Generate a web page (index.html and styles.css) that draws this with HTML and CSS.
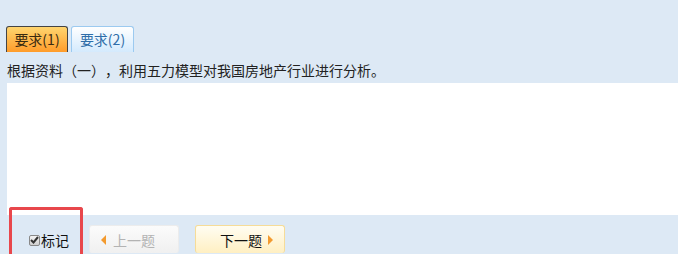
FILE: index.html
```html
<!DOCTYPE html>
<html>
<head>
<meta charset="utf-8">
<link rel="stylesheet" href="styles.css">
</head>
<body>
<div class="page">
  <div class="tabs">
    <div class="tab active">要求(1)</div>
    <div class="tab">要求(2)</div>
  </div>
  <div class="question">根据资料（一），利用五力模型对我国房地产行业进行分析。</div>
  <div class="answer"></div>
  <div class="footer">
    <div class="mark-box">
      <label class="mark"><span class="check"><svg width="9" height="8" viewBox="0 0 9 8"><path d="M1 4 L3.5 6.5 L8 1" fill="none" stroke="#333" stroke-width="2"/></svg></span>标记</label>
    </div>
    <div class="btn prev"><span class="tri-left"></span>上一题</div>
    <div class="btn next">下一题<span class="tri-right"></span></div>
  </div>
</div>
</body>
</html>
```
FILE: styles.css
```css
html, body {
  margin: 0;
  padding: 0;
}
body {
  background: #dde9f5;
  font-family: "Noto Sans CJK SC", "Liberation Sans", sans-serif;
  width: 678px;
  height: 254px;
  overflow: hidden;
  text-spacing-trim: space-all;
}
.page {
  display: flex;
  flex-direction: column;
}
.tabs {
  display: flex;
  gap: 3px;
  padding: 26px 0 0 6px;
}
.tab {
  box-sizing: border-box;
  width: 63px;
  height: 26px;
  border: 1px solid #9ccaf0;
  border-bottom: none;
  border-radius: 3px 3px 0 0;
  background: linear-gradient(#ffffff, #d4eafd);
  color: #2f6ea9;
  font-size: 14px;
  line-height: 25px;
  text-align: center;
}
.tab.active {
  width: 62px;
  border-color: #444;
  background: linear-gradient(#ffd56f, #ff9c2a);
  color: #3a2a10;
}
.question {
  padding-left: 7px;
  margin-top: 8px;
  height: 23px;
  font-size: 14px;
  line-height: 20px;
  color: #222;
}
.answer {
  margin-left: 7px;
  height: 132px;
  background: #fff;
}
.footer {
  display: flex;
  align-items: flex-start;
  padding-left: 9px;
}
.mark-box {
  box-sizing: border-box;
  width: 74px;
  height: 47px;
  margin-top: -8px;
  border: 3px solid #e8474c;
  border-bottom: none;
  border-radius: 3px 3px 0 0;
  padding: 22px 0 0 17px;
}
.mark {
  display: flex;
  align-items: center;
  font-size: 14px;
  line-height: 16px;
  color: #111;
}
.check {
  box-sizing: border-box;
  width: 11px;
  height: 11px;
  border: 1px solid #888;
  border-radius: 2px;
  background: linear-gradient(#f4f4f4, #cfcfcf);
  display: flex;
  align-items: center;
  justify-content: center;
  margin-right: 1px;
}
.btn {
  box-sizing: border-box;
  width: 90px;
  height: 28px;
  margin-top: 10px;
  border-radius: 3px;
  display: flex;
  align-items: center;
  font-size: 14px;
}
.prev {
  margin-left: 6px;
  border: 1px solid #ececec;
  background: linear-gradient(#fbfbfb, #f0f0f0);
  color: #b3b3b3;
  padding-left: 11px;
}
.next {
  margin-left: 16px;
  border: 1px solid #f6dc98;
  border-bottom: none;
  height: 28px;
  background: linear-gradient(#fffdf2, #ffefc2);
  color: #111;
  padding-left: 24px;
}
.prev {
  border-bottom: none;
}
.tri-left {
  width: 0;
  height: 0;
  border-top: 5px solid transparent;
  border-bottom: 5px solid transparent;
  border-right: 5px solid #f39a2e;
  margin-right: 7px;
}
.tri-right {
  width: 0;
  height: 0;
  border-top: 5px solid transparent;
  border-bottom: 5px solid transparent;
  border-left: 5px solid #f39a2e;
  margin-left: 6px;
}
```
